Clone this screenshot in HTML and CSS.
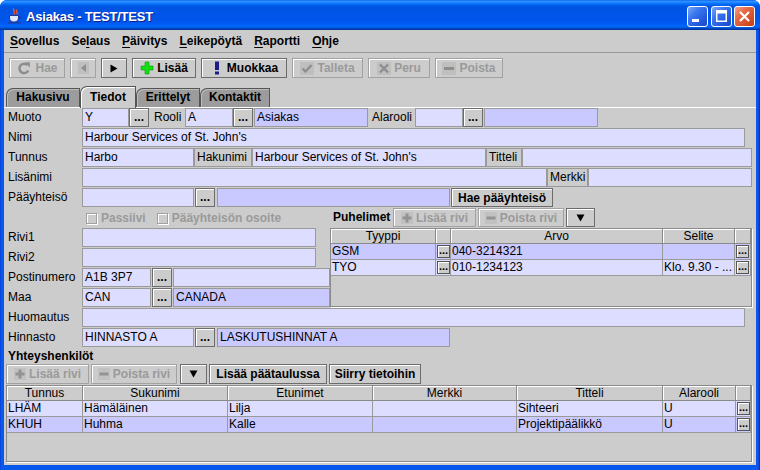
FILE: index.html
```
<!DOCTYPE html>
<html lang="fi">
<head>
<meta charset="utf-8">
<title>Asiakas - TEST/TEST</title>
<link rel="stylesheet" href="styles.css">
</head>
<body>
<div class="window">
  <div class="titlebar">
    <svg class="appicon" width="16" height="16" viewBox="0 0 16 16">
      <path d="M7 0.5C5 2.5 9 3.5 7 6.5M9.8 1.5C8.3 3.5 11.3 4.5 9.8 6.5" stroke="#f0562a" stroke-width="1.4" fill="none"/>
      <path d="M2.5 7.5h9v2.5c0 2.6-2 4-4.5 4S2.5 12.6 2.5 10z" fill="#dfe8ff" stroke="#24389a"/>
      <path d="M11.5 8.5c2.4 0 2.4 3 0 3" stroke="#24389a" fill="none"/>
      <path d="M1 14.8h13" stroke="#24389a" stroke-width="1.2"/>
    </svg>
    <span class="title">Asiakas - TEST/TEST</span>
    <div class="tbtns">
      <div class="tbtn"><svg width="19" height="19" viewBox="0 0 19 19"><rect x="4" y="12" width="7" height="3" fill="#fff"/></svg></div>
      <div class="tbtn"><svg width="19" height="19" viewBox="0 0 19 19"><path d="M4 3h11v12H4zM5.5 6.5v7h8v-7z" fill="#fff" fill-rule="evenodd"/></svg></div>
      <div class="tbtn close"><svg width="19" height="19" viewBox="0 0 19 19"><path d="M5 5l9 9M14 5l-9 9" stroke="#fff" stroke-width="2.2"/></svg></div>
    </div>
  </div>

  <div class="client">
    <div class="menubar">
      <span class="menu"><u>S</u>ovellus</span>
      <span class="menu">Se<u>l</u>aus</span>
      <span class="menu"><u>P</u>äivitys</span>
      <span class="menu"><u>L</u>eikepöytä</span>
      <span class="menu"><u>R</u>aportti</span>
      <span class="menu"><u>O</u>hje</span>
    </div>

    <div class="toolbar">
      <div class="btn dis tb-hae">
        <svg class="ic" width="16" height="16" viewBox="0 0 16 16"><path d="M11.3 5.2A4.6 4.6 0 1 0 12.2 10.5" fill="none" stroke="#8c8c8c" stroke-width="2.4"/><path d="M8.6 2.2h5.2v5.2z" fill="#8c8c8c"/></svg>Hae
      </div>
      <div class="btn dis tb-nav">
        <svg width="11" height="12" viewBox="0 0 11 12"><rect width="11" height="12" fill="#bfbfbf"/><path d="M8 2v8L3 6z" fill="#8e8e8e"/></svg>
      </div>
      <div class="btn tb-nav">
        <svg width="8" height="9" viewBox="0 0 8 9"><path d="M0.5 0.5v8l7-4z" fill="#000"/></svg>
      </div>
      <div class="btn tb-lisaa">
        <svg class="ic" width="14" height="14" viewBox="0 0 14 14"><path d="M5 1h4v4h4v4H9v4H5V9H1V5h4z" fill="#12e012" stroke="#0a9a0a" stroke-width="0.6"/></svg>Lisää
      </div>
      <div class="btn tb-muokkaa">
        <svg class="ic" width="14" height="14" viewBox="0 0 14 14"><rect x="5" y="0.5" width="4" height="8.5" fill="#1c1c86"/><rect x="5" y="10.5" width="4" height="3" fill="#1c1c86"/></svg>Muokkaa
      </div>
      <div class="btn dis tb-talleta">
        <svg class="ic" width="14" height="13" viewBox="0 0 14 13"><rect width="14" height="13" fill="#bfbfbf"/><path d="M2.5 6.5l3 3 6-6.5" fill="none" stroke="#8e8e8e" stroke-width="2.4"/></svg>Talleta
      </div>
      <div class="btn dis tb-peru">
        <svg class="ic" width="14" height="13" viewBox="0 0 14 13"><rect width="14" height="13" fill="#bfbfbf"/><path d="M3 2.5l8 8M11 2.5l-8 8" stroke="#8e8e8e" stroke-width="2.4"/></svg>Peru
      </div>
      <div class="btn dis tb-poista">
        <svg class="ic" width="14" height="13" viewBox="0 0 14 13"><rect width="14" height="13" fill="#bfbfbf"/><rect x="2" y="5" width="10" height="3" fill="#8e8e8e"/></svg>Poista
      </div>
    </div>

    <div class="tabs">
      <div class="tab tab-haku">Hakusivu</div>
      <div class="tab sel tab-tiedot">Tiedot</div>
      <div class="tab tab-eritt">Erittelyt</div>
      <div class="tab tab-kont">Kontaktit</div>
    </div>

    <div class="panel">
      <div class="row">
        <span class="lbl">Muoto</span>
        <span class="f w47">Y</span>
        <span class="dots">...</span>
        <span class="il w36 pl5">Rooli</span>
        <span class="f w48">A</span>
        <span class="dots">...</span>
        <span class="f d w114 ml1">Asiakas</span>
        <span class="il w47 pl4">Alarooli</span>
        <span class="f w48"></span>
        <span class="dots">...</span>
        <span class="f d w114 ml1"></span>
      </div>
      <div class="row">
        <span class="lbl">Nimi</span>
        <span class="f w663">Harbour Services of St. John's</span>
      </div>
      <div class="row">
        <span class="lbl">Tunnus</span>
        <span class="f w112">Harbo</span>
        <span class="bl w58">Hakunimi</span>
        <span class="f w234">Harbour Services of St. John's</span>
        <span class="bl w36">Titteli</span>
        <span class="f w230"></span>
      </div>
      <div class="row">
        <span class="lbl">Lisänimi</span>
        <span class="f w465"></span>
        <span class="bl w41">Merkki</span>
        <span class="f w164"></span>
      </div>
      <div class="row">
        <span class="lbl">Pääyhteisö</span>
        <span class="f w112"></span>
        <span class="dots ml1">...</span>
        <span class="f d w233 ml2"></span>
        <span class="btn w102 ml1 hbtn">Hae pääyhteisö</span>
      </div>

      <div class="split">
        <div class="leftcol">
          <div class="checkrow">
            <span class="cb"></span><span class="cbl">Passiivi</span>
            <span class="cb ml11"></span><span class="cbl">Pääyhteisön osoite</span>
          </div>
          <div class="row">
            <span class="lbl">Rivi1</span>
            <span class="f w234"></span>
          </div>
          <div class="row">
            <span class="lbl">Rivi2</span>
            <span class="f w234"></span>
          </div>
          <div class="row">
            <span class="lbl">Postinumero</span>
            <span class="f w69">A1B 3P7</span>
            <span class="dots ml1">...</span>
            <span class="f w157 ml1"></span>
          </div>
          <div class="row">
            <span class="lbl">Maa</span>
            <span class="f w69">CAN</span>
            <span class="dots ml1">...</span>
            <span class="f d w157 ml1">CANADA</span>
          </div>
        </div>

        <div class="rightcol">
          <div class="subbar">
            <span class="subttl">Puhelimet</span>
            <span class="btn dis sb w83">
              <svg class="ic" width="12" height="12" viewBox="0 0 12 12"><rect width="12" height="12" fill="#c1c1c1"/><path d="M4.5 1.5h3v3h3v3h-3v3h-3v-3h-3v-3h3z" fill="#939393"/></svg>Lisää rivi
            </span>
            <span class="btn dis sb w86 ml2">
              <svg class="ic" width="12" height="12" viewBox="0 0 12 12"><rect width="12" height="12" fill="#c1c1c1"/><rect x="1.5" y="4.5" width="9" height="3" fill="#939393"/></svg>Poista rivi
            </span>
            <span class="btn sb w29 ml2">
              <svg width="9" height="8" viewBox="0 0 9 8"><path d="M0.5 0.5h8l-4 7z" fill="#000"/></svg>
            </span>
          </div>
          <div class="tbl ph">
            <div class="thead">
              <div class="th p1">Tyyppi</div>
              <div class="th p2"></div>
              <div class="th p3">Arvo</div>
              <div class="th p4">Selite</div>
              <div class="th p5"></div>
            </div>
            <div class="tr dk">
              <div class="td p1">GSM</div>
              <div class="td bc p2"><span class="mini">...</span></div>
              <div class="td p3">040-3214321</div>
              <div class="td p4"></div>
              <div class="td bc p5"><span class="mini">...</span></div>
            </div>
            <div class="tr">
              <div class="td p1">TYO</div>
              <div class="td bc p2"><span class="mini">...</span></div>
              <div class="td p3">010-1234123</div>
              <div class="td p4">Klo. 9.30 - ...</div>
              <div class="td bc p5"><span class="mini">...</span></div>
            </div>
          </div>
        </div>
      </div>

      <div class="row">
        <span class="lbl">Huomautus</span>
        <span class="f w663"></span>
      </div>
      <div class="row">
        <span class="lbl">Hinnasto</span>
        <span class="f w112">HINNASTO A</span>
        <span class="dots ml1">...</span>
        <span class="f d w233 ml2">LASKUTUSHINNAT A</span>
      </div>

      <div class="section">Yhteyshenkilöt</div>
      <div class="ctbar">
        <span class="btn dis cbtn w83">
          <svg class="ic" width="12" height="12" viewBox="0 0 12 12"><rect width="12" height="12" fill="#c1c1c1"/><path d="M4.5 1.5h3v3h3v3h-3v3h-3v-3h-3v-3h3z" fill="#939393"/></svg>Lisää rivi
        </span>
        <span class="btn dis cbtn w86 ml2">
          <svg class="ic" width="12" height="12" viewBox="0 0 12 12"><rect width="12" height="12" fill="#c1c1c1"/><rect x="1.5" y="4.5" width="9" height="3" fill="#939393"/></svg>Poista rivi
        </span>
        <span class="btn cbtn w27 ml3">
          <svg width="9" height="8" viewBox="0 0 9 8"><path d="M0.5 0.5h8l-4 7z" fill="#000"/></svg>
        </span>
        <span class="btn cbtn w118 ml2">Lisää päätaulussa</span>
        <span class="btn cbtn w92 ml2">Siirry tietoihin</span>
      </div>

      <div class="tbl ct">
        <div class="thead">
          <div class="th c1">Tunnus</div>
          <div class="th c2">Sukunimi</div>
          <div class="th c3">Etunimet</div>
          <div class="th c4">Merkki</div>
          <div class="th c5">Titteli</div>
          <div class="th c6">Alarooli</div>
          <div class="th c7"></div>
        </div>
        <div class="tr">
          <div class="td c1">LHÄM</div>
          <div class="td c2">Hämäläinen</div>
          <div class="td c3">Lilja</div>
          <div class="td c4"></div>
          <div class="td c5">Sihteeri</div>
          <div class="td c6">U</div>
          <div class="td bc c7"><span class="mini">...</span></div>
        </div>
        <div class="tr dk">
          <div class="td c1">KHUH</div>
          <div class="td c2">Huhma</div>
          <div class="td c3">Kalle</div>
          <div class="td c4"></div>
          <div class="td c5">Projektipäälikkö</div>
          <div class="td c6">U</div>
          <div class="td bc c7"><span class="mini">...</span></div>
        </div>
      </div>
    </div>
  </div>
</div>
</body>
</html>
```

FILE: styles.css
```
* { box-sizing: border-box; }
html, body { margin: 0; padding: 0; }
body {
  width: 760px; height: 470px; overflow: hidden;
  background: #ffffff;
  font-family: "Liberation Sans", Arial, sans-serif;
  font-size: 12px; color: #000;
}

/* ---------- window frame ---------- */
.window {
  width: 760px; height: 470px;
  display: flex; flex-direction: column;
  background: linear-gradient(to right, #0831d9 0px, #0a5ce8 1px, #0758ec 3px, #0758ec 756px, #0a5ce8 758px, #0831d9 759px);
  border-radius: 7px 7px 0 0;
  overflow: hidden;
}
.titlebar {
  height: 30px; flex: none;
  display: flex; align-items: center;
  padding: 0 5px 0 7px;
  background: linear-gradient(to bottom,
    #0058ee 0px, #3593ff 1px, #288eff 2px, #127dff 3px, #036ffc 4px,
    #0262ee 5px, #0057e5 6px, #0054e3 8px, #0055eb 20px, #005bf5 24px,
    #026afe 26px, #0062ef 27px, #0052d6 28px, #0040ab 29px, #003092 30px);
}
.appicon { flex: none; margin-top: 1px; }
.title {
  color: #fff; font-weight: bold; font-size: 13px; letter-spacing: -0.2px;
  margin-left: 3px; margin-top: 3px;
  text-shadow: 1px 1px 0 #0a1e8c;
}
.tbtns { margin-left: auto; display: flex; margin-top: 3px; }
.tbtn {
  width: 21px; height: 21px;
  border: 1px solid #fff; border-radius: 3px;
  background: linear-gradient(135deg, #7aa8fa 0%, #3a76ee 35%, #2258dc 75%, #1b49c4 100%);
  margin-left: 3px;
  display: flex;
}
.tbtn + .tbtn.close { margin-left: 2px; }
.tbtn.close { background: linear-gradient(135deg, #f3a288 0%, #e46a45 35%, #d44d25 75%, #c03c14 100%); }

.client {
  flex: 1;
  margin: 0 4px 5px 4px;
  background: #cccccc;
  display: flex; flex-direction: column;
}

/* ---------- menu ---------- */
.menubar {
  height: 23px; flex: none;
  display: flex; align-items: center;
  border-bottom: 1px solid #999999;
  font-weight: bold;
}
.menu { padding: 0 6px; line-height: 22px; }
.menu u { text-decoration-thickness: 1px; text-underline-offset: 2px; }

/* ---------- buttons ---------- */
.btn {
  display: flex; align-items: center; justify-content: center; gap: 3px;
  flex: none;
  height: 20px;
  border: 1px solid #6c6c6c;
  background: #cccccc;
  box-shadow: inset 1px 1px 0 #ffffff;
  font-weight: bold; color: #000;
  white-space: nowrap;
}
.btn.dis { border-color: #a2a2a2; color: #9a9a9a; }
.ic { flex: none; }

.toolbar { display: flex; gap: 5px; padding: 5px 0 0 5px; flex: none; }
.tb-hae { width: 56px; }
.tb-nav { width: 26px; }
.tb-lisaa { width: 64px; }
.tb-muokkaa { width: 86px; }
.tb-talleta { width: 71px; }
.tb-peru { width: 62px; }
.tb-poista { width: 68px; }

/* ---------- tabs ---------- */
.tabs {
  display: flex; flex: none;
  height: 22px; margin-top: 8px; padding-left: 2px;
  background: linear-gradient(to top, #ffffff 1px, transparent 1px);
}
.tab {
  height: 19px; margin-top: 2px;
  border: 1px solid #555555; border-bottom: none;
  border-top-left-radius: 7px;
  background: #9c9c9c;
  box-shadow: inset 1px 1px 0 #bdbdbd;
  font-weight: bold; text-align: center; line-height: 17px;
}
.tab.sel {
  height: 22px; margin-top: 0;
  background: #cccccc;
  box-shadow: inset 1px 1px 0 #ffffff;
  line-height: 20px;
}
.tab-haku { width: 74px; }
.tab-tiedot { width: 56px; }
.tab-eritt { width: 64px; }
.tab-kont { width: 70px; }

/* ---------- form ---------- */
.panel { flex: 1; display: flex; flex-direction: column; }
.row { display: flex; height: 20px; flex: none; padding-left: 4px; }
.lbl { width: 74px; flex: none; line-height: 19px; white-space: nowrap; }
.il { flex: none; line-height: 19px; white-space: nowrap; }
.f {
  flex: none; height: 19px;
  border: 1px solid #9a9a9a;
  background: #ddddff;
  padding: 0 2px; line-height: 17px;
  white-space: nowrap; overflow: hidden;
}
.f.d { background: #c9c9ff; }
.bl {
  flex: none; height: 19px;
  border: 1px solid #9a9a9a;
  background: #cccccc;
  padding: 0 2px; line-height: 17px; white-space: nowrap;
}
.dots {
  flex: none; width: 20px; height: 19px;
  border: 1px solid #6c6c6c;
  background: #cccccc;
  box-shadow: inset 1px 1px 0 #ffffff;
  font-weight: bold; text-align: center; line-height: 17px;
}
.hbtn { height: 19px; }

.w27 { width: 27px; } .w29 { width: 29px; } .w36 { width: 36px; } .w41 { width: 41px; }
.w47 { width: 47px; } .w48 { width: 48px; } .w58 { width: 58px; } .w69 { width: 69px; }
.w83 { width: 83px; } .w86 { width: 86px; } .w92 { width: 92px; } .w102 { width: 102px; }
.w112 { width: 112px; } .w114 { width: 114px; } .w118 { width: 118px; } .w157 { width: 157px; }
.w164 { width: 164px; } .w230 { width: 230px; } .w233 { width: 233px; } .w234 { width: 234px; }
.w465 { width: 465px; } .w663 { width: 663px; }
.ml1 { margin-left: 1px; } .ml2 { margin-left: 2px; } .ml3 { margin-left: 3px; } .ml11 { margin-left: 11px; }
.pl4 { padding-left: 4px; } .pl5 { padding-left: 5px; }

/* ---------- split area ---------- */
.split { display: flex; height: 100px; flex: none; }
.leftcol { width: 326px; flex: none; }
.rightcol { width: 422px; flex: none; display: flex; flex-direction: column; }
.checkrow { height: 20px; display: flex; align-items: center; padding-left: 82px; }
.cb {
  width: 11px; height: 11px; flex: none;
  border: 1px solid #a0a0a0;
  box-shadow: 1px 1px 0 #ffffff, inset 1px 1px 0 #ffffff;
}
.cbl { margin-left: 4px; color: #9a9a9a; font-weight: bold; white-space: nowrap; }

.subbar { height: 20px; display: flex; align-items: flex-start; flex: none; }
.subttl { width: 63px; padding-left: 3px; font-weight: bold; line-height: 19px; }
.sb { height: 19px; }

/* ---------- tables ---------- */
.tbl {
  flex: none;
  border: 1px solid #8a8a8a;
  box-shadow: 1px 1px 0 #ffffff;
  background: #cccccc;
  display: flex; flex-direction: column;
  overflow: hidden;
}
.ph { width: 422px; height: 79px; }
.ct { width: 746px; height: 77px; margin: 1px 0 0 2px; }
.thead, .tr { display: flex; flex: none; }
.th {
  flex: none; height: 15px;
  border-right: 1px solid #8a8a8a; border-bottom: 1px solid #8a8a8a;
  box-shadow: inset 1px 1px 0 #ffffff;
  text-align: center; line-height: 14px; white-space: nowrap;
}
.tr { background: #ddddff; }
.tr.dk { background: #c9c9ff; }
.td {
  flex: none; height: 16px;
  border-right: 1px solid #9a9a9a; border-bottom: 1px solid #9a9a9a;
  padding-left: 1px; line-height: 15px;
  white-space: nowrap; overflow: hidden;
}
.td.bc { padding: 1px 0 0 1px; }
.mini {
  display: block; width: 13px; height: 13px;
  border: 1px solid #555555;
  background: #cccccc;
  box-shadow: inset 1px 1px 0 #ffffff;
  font-weight: bold; font-size: 11px; line-height: 8px; text-align: center;
  overflow: hidden;
}
.p1 { width: 105px; } .p2 { width: 15px; } .p3 { width: 212px; } .p4 { width: 72px; } .p5 { width: 16px; }
.c1 { width: 76px; } .c2 { width: 145px; } .c3 { width: 145px; } .c4 { width: 144px; }
.c5 { width: 146px; } .c6 { width: 73px; } .c7 { width: 15px; }

.section { height: 16px; flex: none; font-weight: bold; line-height: 16px; padding-left: 4px; }
.ctbar { display: flex; height: 20px; flex: none; padding-left: 2px; }
.cbtn { height: 20px; }
```
